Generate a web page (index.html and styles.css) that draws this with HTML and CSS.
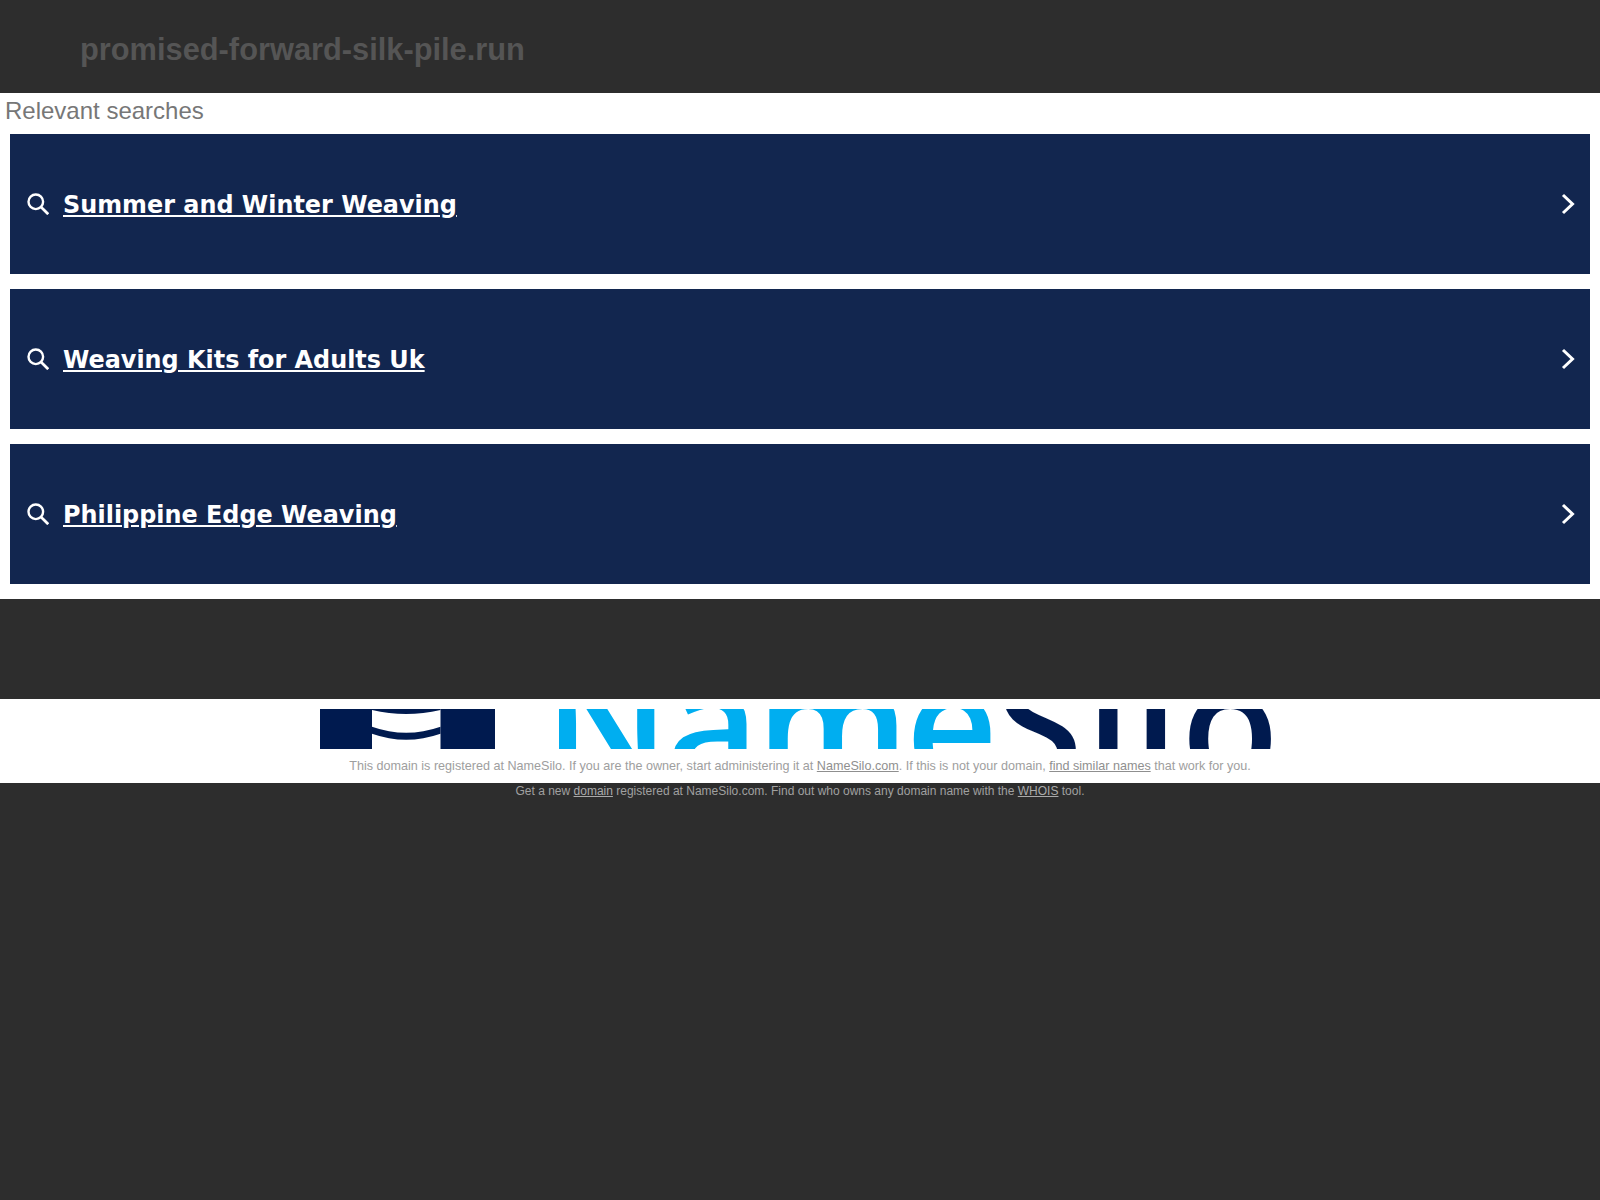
FILE: index.html
```html
<!DOCTYPE html>
<html lang="en">
<head>
<meta charset="utf-8">
<title>promised-forward-silk-pile.run</title>
<link rel="stylesheet" href="styles.css">
</head>
<body>
<header class="top"><h1 class="domain">promised-forward-silk-pile.run</h1></header>
<main class="results">
  <h2 class="results-title">Relevant searches</h2>
  <div class="cards">
    <div class="card">
      <svg class="icon-search" viewBox="0 0 22 22"><circle cx="8.800" cy="8.800" r="7.300" fill="none" stroke="#fff" stroke-width="2.400"/><path d="M14 14L21.200 21.200" fill="none" stroke="#fff" stroke-width="2.700"/></svg>
      <a class="card-link" href="#">Summer and Winter Weaving</a>
      <svg class="icon-chevron" viewBox="0 0 14 22"><path d="M2 2l9.500 9-9.500 9" fill="none" stroke="#fff" stroke-width="3"/></svg>
    </div>
    <div class="card">
      <svg class="icon-search" viewBox="0 0 22 22"><circle cx="8.800" cy="8.800" r="7.300" fill="none" stroke="#fff" stroke-width="2.400"/><path d="M14 14L21.200 21.200" fill="none" stroke="#fff" stroke-width="2.700"/></svg>
      <a class="card-link" href="#">Weaving Kits for Adults Uk</a>
      <svg class="icon-chevron" viewBox="0 0 14 22"><path d="M2 2l9.500 9-9.500 9" fill="none" stroke="#fff" stroke-width="3"/></svg>
    </div>
    <div class="card">
      <svg class="icon-search" viewBox="0 0 22 22"><circle cx="8.800" cy="8.800" r="7.300" fill="none" stroke="#fff" stroke-width="2.400"/><path d="M14 14L21.200 21.200" fill="none" stroke="#fff" stroke-width="2.700"/></svg>
      <a class="card-link" href="#">Philippine Edge Weaving</a>
      <svg class="icon-chevron" viewBox="0 0 14 22"><path d="M2 2l9.500 9-9.500 9" fill="none" stroke="#fff" stroke-width="3"/></svg>
    </div>
  </div>
</main>
<div class="spacer"></div>
<section class="registrar">
  <div class="logo">
    <svg class="logo-mark" viewBox="0 0 175 40"><path d="M0 0H175V40H0Z" fill="#001a4f"/><path d="M52 0H120.500V40H52Z" fill="#fff"/><path d="M52 17.700Q86 29.700 120.500 17.700V24.700Q86 36.700 52 24.700Z" fill="#001a4f"/><path d="M52 0H120.500V1Q86 9 52 1Z" fill="#001a4f"/></svg>
    <div class="logo-word"><span class="logo-name">Name</span><span class="logo-silo">Silo</span></div>
  </div>
  <p class="reg-note">This domain is registered at NameSilo. If you are the owner, start administering it at <a href="#">NameSilo.com</a>. If this is not your domain, <a href="#">find similar names</a> that work for you.</p>
</section>
<p class="foot-note">Get a new <a href="#">domain</a> registered at NameSilo.com. Find out who owns any domain name with the <a href="#">WHOIS</a> tool.</p>
</body>
</html>
```
FILE: styles.css
```css
html, body { margin: 0; padding: 0; }
body { background: #2d2d2d; font-family: "Liberation Sans", Arial, sans-serif; min-height: 1200px; }
.top { height: 93px; padding-left: 80px; box-sizing: border-box; }
.domain { margin: 0; padding-top: 33px; font-size: 30.8px; line-height: 34px; font-weight: 700; color: #555; }
.results { background: #fff; height: 506px; box-sizing: border-box; }
.results-title { margin: 0; padding: 4px 0 0 5px; height: 41px; box-sizing: border-box; font-size: 24px; line-height: 27px; font-weight: 400; color: #777; }
.cards { display: flex; flex-direction: column; gap: 15px; padding: 0 10px; }
.card { height: 140px; background: #12264f; display: flex; align-items: center; padding: 0 15.5px 0 17px; }
.icon-search { width: 22px; height: 22px; margin-right: 14px; flex: none; }
.card-link { font-family: "DejaVu Sans", Verdana, sans-serif; font-size: 23.9px; line-height: 30px; padding-top: 1px; font-weight: 700; color: #fff; text-decoration: underline; }
.icon-chevron { width: 14px; height: 22px; margin-left: auto; flex: none; }
.spacer { height: 100px; }
.registrar { background: #fff; height: 84px; padding-top: 10px; box-sizing: border-box; }
.logo { height: 40px; margin-left: 320px; width: 960px; display: flex; overflow: hidden; }
.logo-mark { width: 175px; height: 40px; flex: none; }
.logo-word { margin-left: 49px; height: 40px; font-family: "Open Sans", sans-serif; font-weight: 600; font-size: 160px; line-height: 22px; white-space: nowrap; }
.logo-name { color: #00aef0; letter-spacing: -3px; }
.logo-silo { color: #001a4f; letter-spacing: 3px; }
.reg-note { margin: 9px 0 0; text-align: center; font-size: 12.6px; line-height: 16px; color: #9e9e9e; }
.reg-note a { color: #8f8f8f; }
.foot-note { margin: 0; padding-top: 0; text-align: center; font-size: 12px; line-height: 16px; color: #a0a0a0; }
.foot-note a { color: #aaa; }
```
